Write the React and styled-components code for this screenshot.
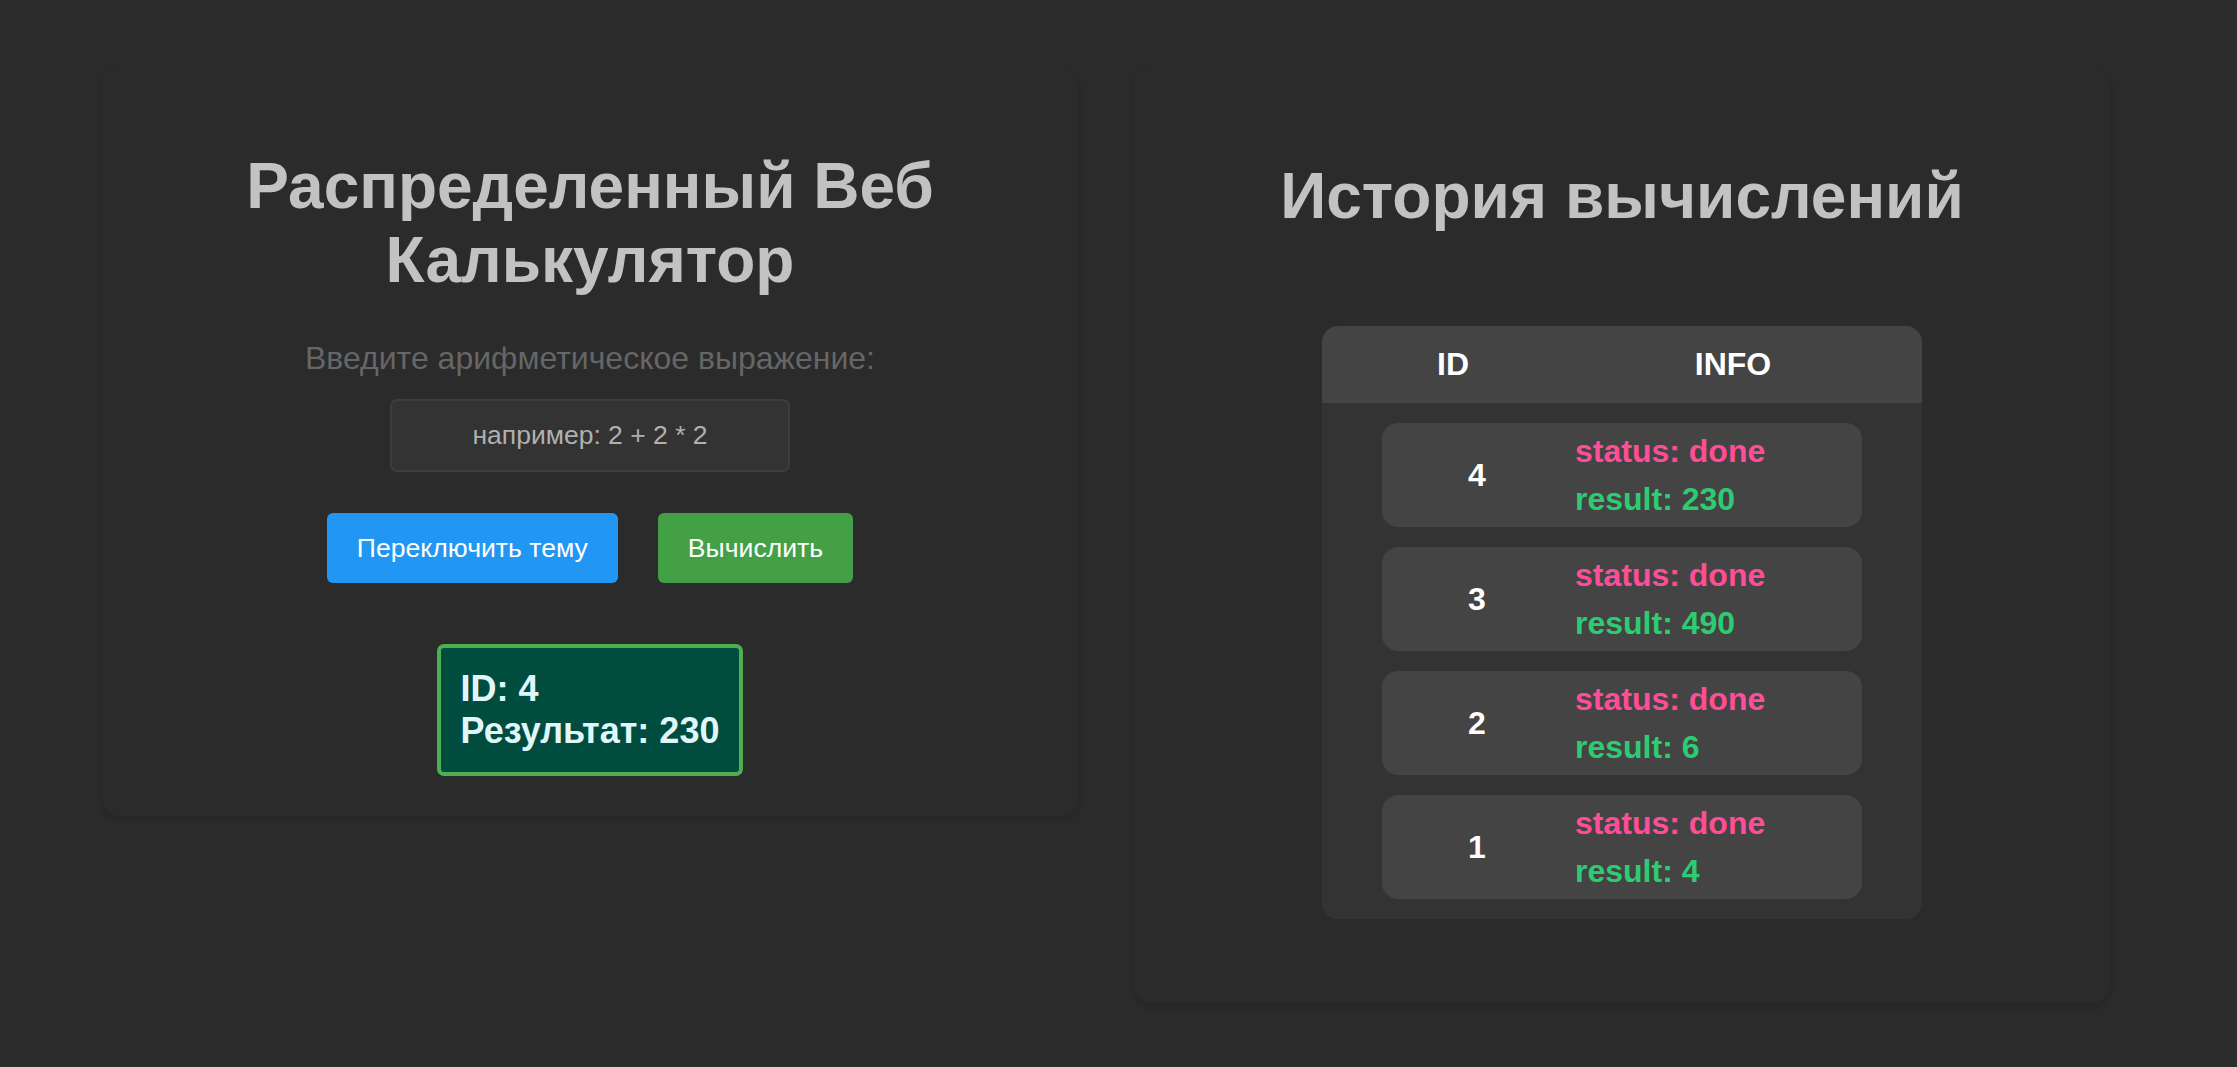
import React, { useState } from 'react';
import styled, { createGlobalStyle } from 'styled-components';

const GlobalStyle = createGlobalStyle`
  body {
    margin: 0;
    padding: 0;
    background-color: #2c2c2c;
    font-family: "Liberation Sans", Arial, sans-serif;
  }
`;

const Page = styled.div`
  display: flex;
  align-items: flex-start;
  gap: 56px;
  padding: 66px 127px 40px 102px;
  min-height: 100vh;
  box-sizing: border-box;
`;

const Card = styled.div`
  flex: 1;
  background-color: #2b2b2b;
  border-radius: 18px;
  box-shadow: 0 4px 12px rgba(0, 0, 0, 0.18);
  padding: 40px 40px 40px;
  display: flex;
  flex-direction: column;
  align-items: center;
  text-align: center;
`;

const Title = styled.h1`
  font-size: 64px;
  font-weight: bold;
  color: #c2c2c2;
  margin: 43px 0 0;
  line-height: normal;
`;

const HistoryTitle = styled(Title).attrs({ as: 'h2' })`
  margin-top: 53px;
`;

const Label = styled.p`
  font-size: 32px;
  color: #666666;
  margin: 43px 0 0;
`;

const ExprInput = styled.input`
  width: 400px;
  height: 73px;
  box-sizing: border-box;
  margin-top: 22px;
  background-color: #333333;
  border: 2px solid #3d3d3d;
  border-radius: 7px;
  color: #e0e0e0;
  font-family: "Liberation Sans", Arial, sans-serif;
  font-size: 26.5px;
  text-align: center;
  outline: none;

  &::placeholder {
    color: #b0b0b0;
  }
`;

const ButtonRow = styled.div`
  display: flex;
  gap: 40px;
  margin-top: 41px;
`;

const ActionButton = styled.button`
  height: 70px;
  padding: 0 30px;
  border: none;
  border-radius: 6px;
  background-color: ${(p) => (p.$variant === 'green' ? '#43a047' : '#2196f3')};
  color: white;
  font-family: "Liberation Sans", Arial, sans-serif;
  font-size: 26.6px;
  cursor: pointer;
`;

const ResultBox = styled.div`
  margin-top: 61px;
  padding: 20px;
  border: 4px solid #4caf50;
  border-radius: 7px;
  background-color: #004d40;
  color: #e0f7fa;
  font-size: 36px;
  font-weight: bold;
  text-align: left;
`;

const Table = styled.div`
  width: 600px;
  margin-top: 93px;
  margin-bottom: 44px;
  background-color: #333333;
  border-radius: 16px;
  overflow: hidden;
  padding-bottom: 20px;
`;

const HeaderRow = styled.div`
  display: flex;
  height: 77px;
  align-items: center;
  background-color: #444444;
  color: white;
  font-size: 32px;
  font-weight: bold;
`;

const HeaderCell = styled.div`
  width: ${(p) => p.$width}px;
  text-align: center;
`;

const Rows = styled.div`
  display: flex;
  flex-direction: column;
  gap: 20px;
  padding-top: 20px;
  align-items: center;
`;

const Row = styled.div`
  width: 480px;
  display: flex;
  align-items: center;
  padding: 4px 0;
  background-color: #444444;
  border-radius: 16px;
  font-size: 32px;
  font-weight: bold;
`;

const IdCell = styled.div`
  width: 190px;
  text-align: center;
  color: white;
`;

const InfoCell = styled.div`
  padding-left: 3px;
  text-align: left;
  line-height: 48px;
`;

const InfoLine = styled.div`
  color: ${(p) => (p.$kind === 'status' ? '#ff4d97' : '#2ecc71')};
`;

const history = [
  { id: 4, status: 'done', result: 230 },
  { id: 3, status: 'done', result: 490 },
  { id: 2, status: 'done', result: 6 },
  { id: 1, status: 'done', result: 4 },
];

function App() {
  const [expr, setExpr] = useState('');

  return (
    <>
      <GlobalStyle />
      <Page>
        <Card>
          <Title>
            Распределенный Веб
            <br />
            Калькулятор
          </Title>
          <Label>Введите арифметическое выражение:</Label>
          <ExprInput
            placeholder="например: 2 + 2 * 2"
            value={expr}
            onChange={(e) => setExpr(e.target.value)}
          />
          <ButtonRow>
            <ActionButton>Переключить тему</ActionButton>
            <ActionButton $variant="green">Вычислить</ActionButton>
          </ButtonRow>
          <ResultBox>
            <div>ID: 4</div>
            <div>Результат: 230</div>
          </ResultBox>
        </Card>

        <Card>
          <HistoryTitle>История вычислений</HistoryTitle>
          <Table>
            <HeaderRow>
              <HeaderCell $width={262}>ID</HeaderCell>
              <HeaderCell $width={298}>INFO</HeaderCell>
            </HeaderRow>
            <Rows>
              {history.map((item) => (
                <Row key={item.id}>
                  <IdCell>{item.id}</IdCell>
                  <InfoCell>
                    <InfoLine $kind="status">status: {item.status}</InfoLine>
                    <InfoLine $kind="result">result: {item.result}</InfoLine>
                  </InfoCell>
                </Row>
              ))}
            </Rows>
          </Table>
        </Card>
      </Page>
    </>
  );
}

export default App;
